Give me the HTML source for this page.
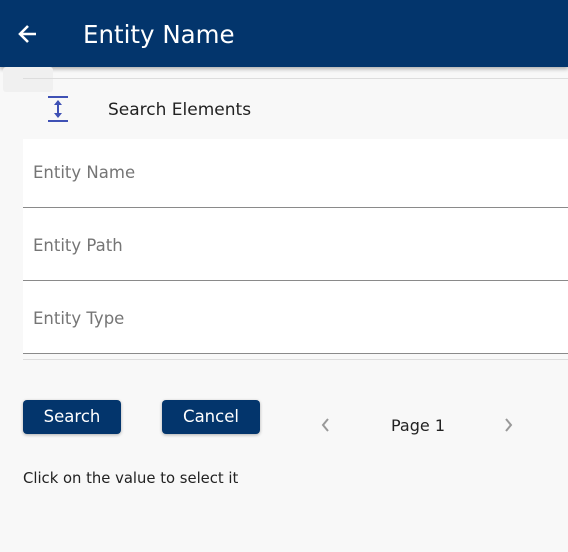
<!DOCTYPE html>
<html><head><style>
body{margin:0;width:568px;height:552px;background:#f8f8f8;font-family:"DejaVu Sans",sans-serif;position:relative;overflow:hidden}
.hdr{position:absolute;left:0;top:0;width:568px;height:67px;background:#03356c;box-shadow:0 2px 4px rgba(0,0,0,.3)}
.hdr .t{position:absolute;left:83px;top:20px;color:#fff;font-size:24.5px}
.f{position:absolute;left:23px;width:545px;background:#fff;border-bottom:1px solid #8a8a8a;color:#757575;font-size:16.5px}
.f span{position:absolute;left:10px}
.btn{position:absolute;top:400px;height:34px;background:#03356c;color:#fff;border-radius:4px;font-size:16.5px;text-align:center;line-height:34px;box-shadow:0 1px 3px rgba(0,0,0,.3)}
</style></head><body>
<div class="hdr">
<svg style="position:absolute;left:16px;top:22px" width="24" height="24" viewBox="0 0 24 24"><path d="M20 12H5M12 4l-8 8 8 8" stroke="#fff" stroke-width="2.6" fill="none"/></svg>
<div class="t">Entity Name</div></div>
<div style="position:absolute;left:3px;top:67px;width:50px;height:25px;background:#f0f0f0;border-radius:3px"></div>
<div style="position:absolute;left:23px;top:78px;width:545px;height:1px;background:#ddd"></div>
<svg style="position:absolute;left:47px;top:96px" width="22" height="26" viewBox="0 0 22 26"><path d="M1 1H21M1 25H21" stroke="#3f51b5" stroke-width="2"/><path d="M11 5V21" stroke="#3f51b5" stroke-width="2"/><path d="M7 9L11 4 15 9ZM7 17L11 22 15 17Z" fill="#3f51b5"/></svg>
<div style="position:absolute;left:108px;top:100px;font-size:17px;color:#222">Search Elements</div>
<div class="f" style="top:139px;height:68px"><span style="top:24px">Entity Name</span></div>
<div class="f" style="top:208px;height:72px"><span style="top:28px">Entity Path</span></div>
<div class="f" style="top:281px;height:72px"><span style="top:28px">Entity Type</span></div>
<div style="position:absolute;left:23px;top:359px;width:545px;height:1px;background:#ddd"></div>
<div class="btn" style="left:23px;width:98px">Search</div>
<div class="btn" style="left:162px;width:98px">Cancel</div>
<svg style="position:absolute;left:320px;top:417px" width="10" height="16"><path d="M8 2L3 8 8 14" stroke="#999" stroke-width="2" fill="none"/></svg>
<div style="position:absolute;left:391px;top:416px;font-size:16px;color:#222">Page 1</div>
<svg style="position:absolute;left:504px;top:417px" width="10" height="16"><path d="M2 2L7 8 2 14" stroke="#999" stroke-width="2" fill="none"/></svg>
<div style="position:absolute;left:23px;top:470px;font-size:14.8px;color:#222">Click on the value to select it</div>
</body></html>
